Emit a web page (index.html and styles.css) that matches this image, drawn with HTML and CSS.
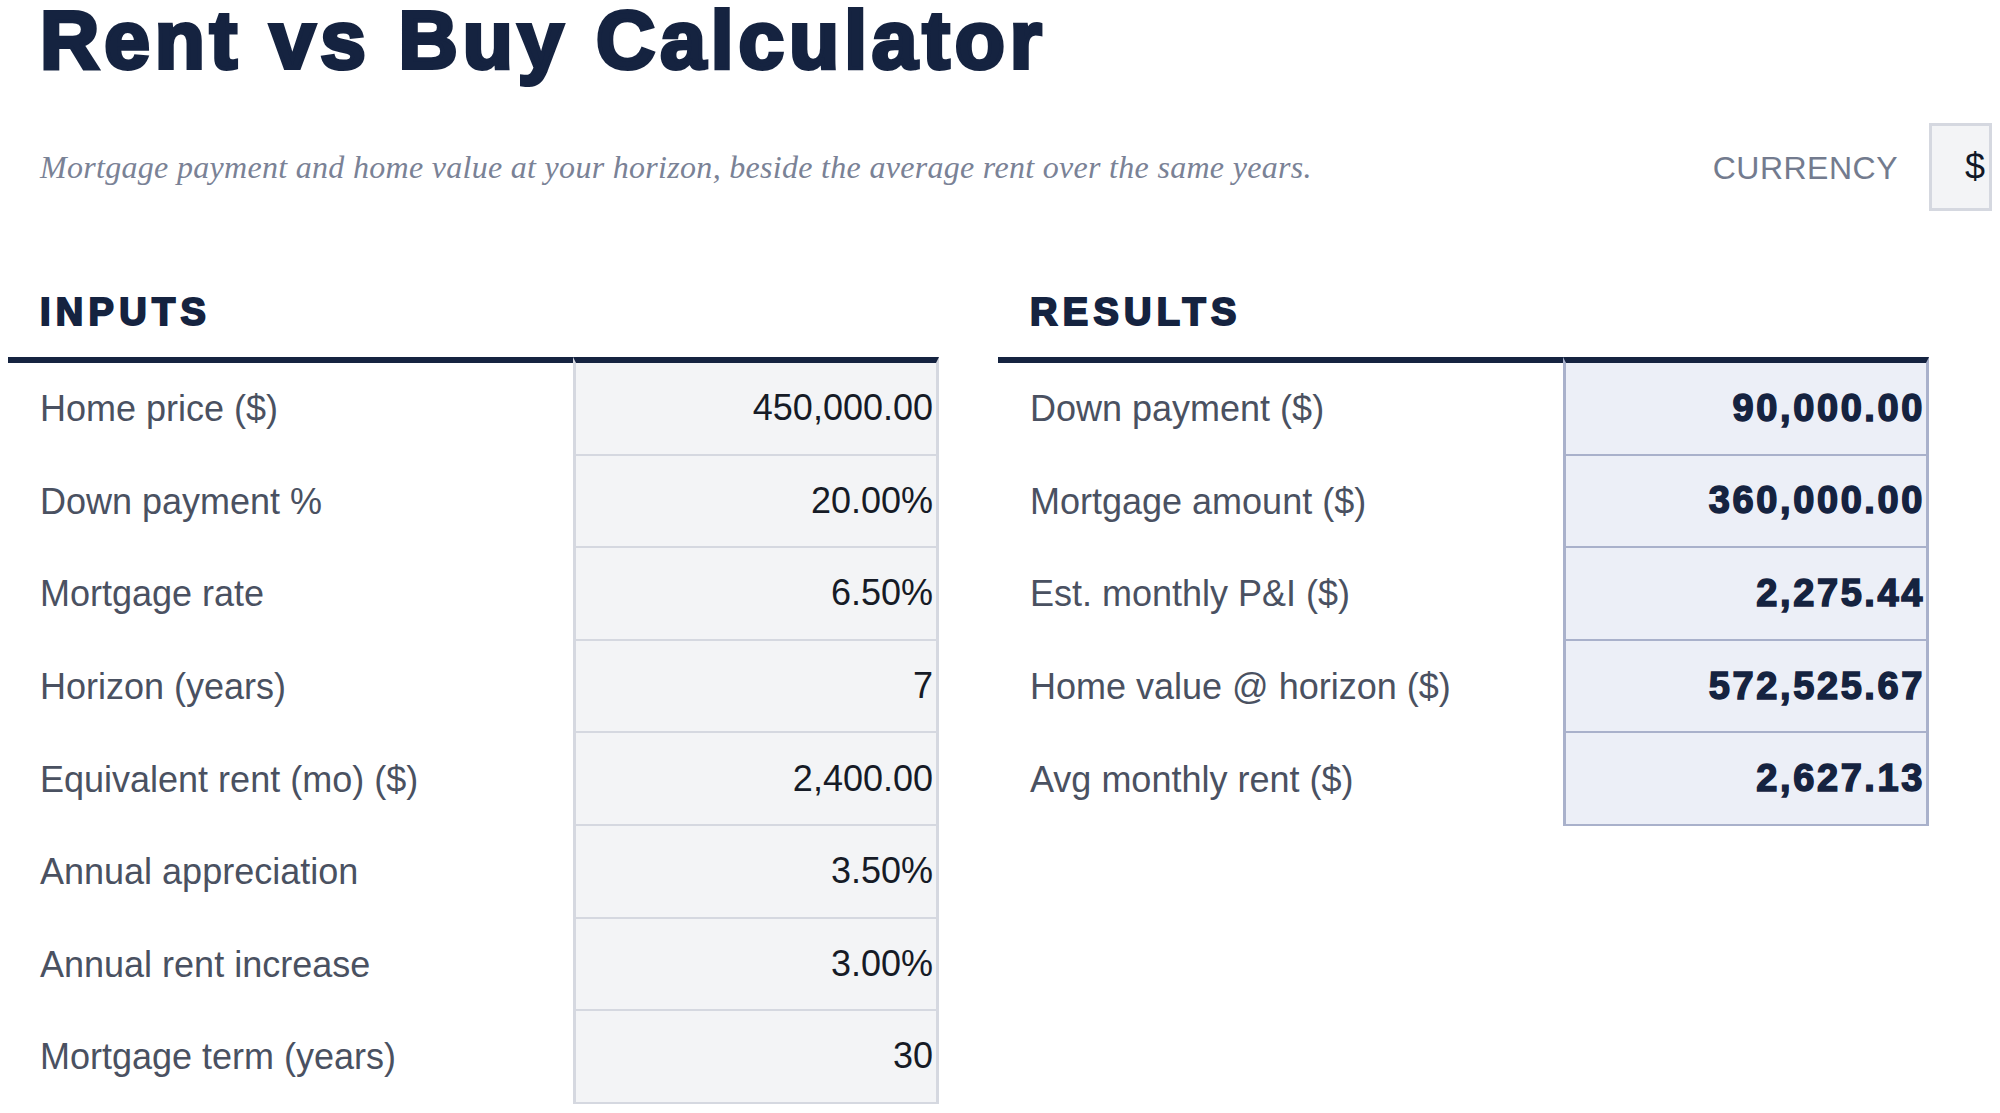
FILE: index.html
```html
<!DOCTYPE html>
<html lang="en">
<head>
<meta charset="utf-8">
<title>Rent vs Buy Calculator</title>
<link rel="stylesheet" href="styles.css">
</head>
<body>
<main class="page">
  <h1 class="title">Rent vs Buy Calculator</h1>
  <div class="subbar">
    <p class="subtitle">Mortgage payment and home value at your horizon, beside the average rent over the same years.</p>
    <div class="currency">
      <span class="currency-label">CURRENCY</span>
      <span class="currency-box">$</span>
    </div>
  </div>
  <div class="panels">
    <section class="panel">
      <h2 class="panel-title">INPUTS</h2>
      <div class="sheet sheet-inputs">
        <div class="cell label">Home price ($)</div><div class="cell value">450,000.00</div>
        <div class="cell label">Down payment %</div><div class="cell value">20.00%</div>
        <div class="cell label">Mortgage rate</div><div class="cell value">6.50%</div>
        <div class="cell label">Horizon (years)</div><div class="cell value">7</div>
        <div class="cell label">Equivalent rent (mo) ($)</div><div class="cell value">2,400.00</div>
        <div class="cell label">Annual appreciation</div><div class="cell value">3.50%</div>
        <div class="cell label">Annual rent increase</div><div class="cell value">3.00%</div>
        <div class="cell label">Mortgage term (years)</div><div class="cell value">30</div>
      </div>
    </section>
    <section class="panel">
      <h2 class="panel-title">RESULTS</h2>
      <div class="sheet sheet-results">
        <div class="cell label">Down payment ($)</div><div class="cell value">90,000.00</div>
        <div class="cell label">Mortgage amount ($)</div><div class="cell value">360,000.00</div>
        <div class="cell label">Est. monthly P&amp;I ($)</div><div class="cell value">2,275.44</div>
        <div class="cell label">Home value @ horizon ($)</div><div class="cell value">572,525.67</div>
        <div class="cell label">Avg monthly rent ($)</div><div class="cell value">2,627.13</div>
      </div>
    </section>
  </div>
</main>
</body>
</html>
```
FILE: styles.css
```css
* { box-sizing: border-box; }

body {
  margin: 0;
  background: #ffffff;
  font-family: "Liberation Sans", Arial, sans-serif;
  color: #111827;
}

.page {
  padding: 0 8px;
}

.title {
  margin: 0;
  padding-left: 32px;
  font-size: 82px;
  line-height: 79px;
  font-weight: 700;
  letter-spacing: 4.95px;
  color: #152340;
  -webkit-text-stroke: 4px #152340;
  white-space: nowrap;
}

.subbar {
  display: flex;
  align-items: center;
  justify-content: space-between;
  margin-top: 44px;
  padding-left: 32px;
  height: 88px;
}

.subtitle {
  margin: 0;
  font-family: "Liberation Serif", "Times New Roman", serif;
  font-style: italic;
  font-size: 32px;
  letter-spacing: 0.3px;
  color: #7a8296;
}

.currency {
  display: flex;
  align-items: baseline;
  gap: 31px;
}

.currency-label {
  font-size: 32px;
  letter-spacing: 0.5px;
  color: #737b8e;
}

.currency-box {
  display: flex;
  align-items: center;
  justify-content: flex-end;
  width: 63px;
  height: 88px;
  padding-right: 4px;
  border: 3px solid #d5d8e0;
  background: #f3f4f6;
  font-size: 36px;
  color: #111827;
}

.panels {
  display: grid;
  grid-template-columns: 931px 931px;
  column-gap: 59px;
  margin-top: 79px;
}

.panel-title {
  margin: 0 0 23px;
  padding-left: 32px;
  font-size: 38px;
  line-height: 44px;
  font-weight: 700;
  letter-spacing: 5.3px;
  color: #152340;
  -webkit-text-stroke: 2px #152340;
}

.sheet {
  display: grid;
  grid-template-columns: 565px 1fr;
}

.cell {
  display: flex;
  align-items: center;
  min-height: 92.6px;
  font-size: 36px;
  white-space: nowrap;
}

.cell:nth-child(-n+2) {
  border-top: 6px solid #152340;
  min-height: 98.6px;
}

.label {
  padding-left: 32px;
  color: #4a5161;
}

.value {
  justify-content: flex-end;
  padding-right: 3px;
  border-left: 3px solid #d5d8e0;
  border-right: 3px solid #d5d8e0;
  border-bottom: 2px solid #d5d8e0;
  background: #f3f4f6;
  color: #161b26;
}

.sheet-results .value {
  padding-right: 1px;
  border-left-color: #a9b1cb;
  border-right-color: #a9b1cb;
  border-bottom-color: #a9b1cb;
  background: #eceff7;
  color: #152340;
  font-size: 38px;
  font-weight: 700;
  letter-spacing: 2.6px;
  -webkit-text-stroke: 1.5px #152340;
}
```
